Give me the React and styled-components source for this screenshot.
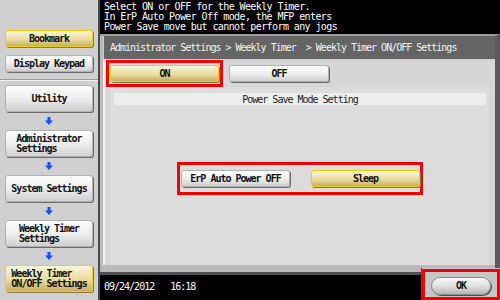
import React from 'react';
import styled, { createGlobalStyle, css } from 'styled-components';

const GlobalStyle = createGlobalStyle`
  html, body { margin: 0; padding: 0; background: #000; }
  body { font-family: "DejaVu Sans Mono", "Liberation Mono", monospace; }
`;

const Screen = styled.div`
  width: 500px;
  height: 300px;
  display: grid;
  grid-template-columns: 100px 400px;
  overflow: hidden;
`;

const Sidebar = styled.div`
  background: #d0d0d0;
  border-right: 2px solid #4a4a4a;
  display: flex;
  flex-direction: column;
  box-sizing: border-box;
`;

const SideTop = styled.div`
  display: flex;
  flex-direction: column;
  gap: 8px;
  padding: 30px 5px 7px 5px;
  border-bottom: 1px solid #9a9a9a;
  box-shadow: 0 1px 0 #efefef;
`;

const StepList = styled.div`
  display: flex;
  flex-direction: column;
  padding: 5px 5px 0 5px;
`;

const yellow = css`
  background: linear-gradient(#fbf5d6, #e9dca4 55%, #c9ae62);
  border: 1px solid #f0d000;
  box-shadow: 1px 1px 0 #8a7a30;
`;

const grey = css`
  background: linear-gradient(#fdfdfd, #ececec 55%, #cfcfcf);
  border: 1px solid #b0b0b0;
  box-shadow: 1px 1px 0 #6a6a6a;
`;

const Button = styled.div`
  box-sizing: border-box;
  width: ${({ $w }) => $w || 'auto'};
  height: ${({ $h }) => $h || 17}px;
  border-radius: 3px;
  display: flex;
  align-items: center;
  justify-content: center;
  font-size: 10px;
  font-weight: bold;
  letter-spacing: -1px;
  line-height: 10px;
  color: #111;
  white-space: pre;
  ${({ $active }) => ($active ? yellow : grey)}
`;

const Lines = styled.span`
  text-align: left;
`;

const ArrowRow = styled.div`
  height: 18px;
  display: flex;
  align-items: center;
  justify-content: center;
`;

const Main = styled.div`
  display: flex;
  flex-direction: column;
  background: #000;
`;

const Message = styled.div`
  height: 34px;
  padding: 2px 0 0 4px;
  box-sizing: border-box;
  color: #fff;
  font-size: 10px;
  letter-spacing: -0.6px;
  line-height: 10px;
  white-space: pre;
`;

const Frame = styled.div`
  height: 238px;
  box-sizing: border-box;
  background: #b9b9b9;
  border-top: 2px solid #9c9c9c;
  border-right: 5px solid #5a5a5a;
  padding: 0 0 7px 3px;
  display: flex;
  flex-direction: column;
`;

const Crumbs = styled.div`
  height: 24px;
  box-sizing: border-box;
  background: #656565;
  border-left: 1px solid #c8c8c8;
  border-bottom: 1px solid #d0d0d0;
  color: #f2f2f2;
  font-size: 10px;
  letter-spacing: -1px;
  padding: 0 0 0 6px;
  display: flex;
  align-items: center;
  white-space: pre;
`;

const Content = styled.div`
  flex: 1;
  background: #d6d6d6;
  border-left: 2px solid #f0f0f0;
  display: flex;
  flex-direction: column;
`;

const ToggleRow = styled.div`
  display: flex;
  align-items: center;
  gap: 6px;
  padding-left: 1px;
`;

const Mark = styled.div`
  border: 3px solid #f00000;
  padding: ${({ $pad }) => $pad || '2px 1px'};
  display: flex;
  align-items: center;
  gap: ${({ $gap }) => $gap || 0}px;
`;

const Section = styled.div`
  flex: 1;
  margin: 0 5px 0 5px;
  background: #dcdcdc;
  border-radius: 4px 4px 0 0;
  padding: 6px 4px 0 4px;
  display: flex;
  flex-direction: column;
  align-items: center;
`;

const SectionTitle = styled.div`
  align-self: stretch;
  height: 12px;
  background: #eeeeee;
  border-radius: 2px;
  font-size: 10px;
  letter-spacing: -1px;
  color: #222;
  display: flex;
  align-items: center;
  justify-content: center;
`;

const ModeMark = styled(Mark)`
  margin-top: 57px;
`;

const Bottom = styled.div`
  flex: 1;
  display: flex;
`;

const Status = styled.div`
  flex: 1;
  border-top: 3px solid #505050;
  background: #000;
  color: #fff;
  font-size: 10px;
  letter-spacing: -1px;
  display: flex;
  align-items: center;
  gap: 16px;
  padding: 0 0 2px 4px;
`;

const OkTab = styled.div`
  width: 78px;
  margin-top: -4px;
  background: #c6c6c6;
  border-left: 1px solid #505050;
  display: flex;
  align-items: center;
  justify-content: center;
`;

const OkMark = styled(Mark)`
  padding: 5px 4px 2px 4px;
  width: 100%;
  box-sizing: border-box;
  justify-content: center;
`;

const Pill = styled(Button)`
  border-radius: 9px;
  height: 18px;
  background: linear-gradient(#f7f7f7, #e0e0e0 50%, #b4b4b4);
  border: 1px solid #8a8a8a;
  box-shadow: 1px 1px 0 #505050;
`;

const Arrow = () => (
  <svg width="8" height="8" viewBox="0 0 8 8">
    <path d="M2.5 0h3v3.5H8L4 8 0 3.5h2.5z" fill="#1a4cff" />
  </svg>
);

const steps = [
  { label: 'Utility' },
  { label: 'Administrator\nSettings' },
  { label: 'System Settings' },
  { label: 'Weekly Timer\nSettings' },
  { label: 'Weekly Timer\nON/OFF Settings', active: true },
];

export default function App() {
  return (
    <>
      <GlobalStyle />
      <Screen>
        <Sidebar>
          <SideTop>
            <Button $active>Bookmark</Button>
            <Button>Display Keypad</Button>
          </SideTop>
          <StepList>
            {steps.map((s, i) => (
              <React.Fragment key={s.label}>
                {i > 0 && (
                  <ArrowRow>
                    <Arrow />
                  </ArrowRow>
                )}
                <Button $h={27} $active={s.active}>
                  <Lines>{s.label}</Lines>
                </Button>
              </React.Fragment>
            ))}
          </StepList>
        </Sidebar>
        <Main>
          <Message>
            {'Select ON or OFF for the Weekly Timer.\nIn ErP Auto Power Off mode, the MFP enters\nPower Save move but cannot perform any jogs'}
          </Message>
          <Frame>
            <Crumbs>Administrator Settings &gt; Weekly Timer  &gt; Weekly Timer ON/OFF Settings</Crumbs>
            <Content>
              <ToggleRow>
                <Mark>
                  <Button $w="109px" $active>ON</Button>
                </Mark>
                <Button $w="100px">OFF</Button>
              </ToggleRow>
              <Section>
                <SectionTitle>Power Save Mode Setting</SectionTitle>
                <ModeMark $pad="5px 0 5px 1px" $gap={21}>
                  <Button $w="109px">ErP Auto Power OFF</Button>
                  <Button $w="109px" $active>Sleep</Button>
                </ModeMark>
              </Section>
            </Content>
          </Frame>
          <Bottom>
            <Status>
              <span>09/24/2012</span>
              <span>16:18</span>
            </Status>
            <OkTab>
              <OkMark>
                <Pill $w="60px">OK</Pill>
              </OkMark>
            </OkTab>
          </Bottom>
        </Main>
      </Screen>
    </>
  );
}
